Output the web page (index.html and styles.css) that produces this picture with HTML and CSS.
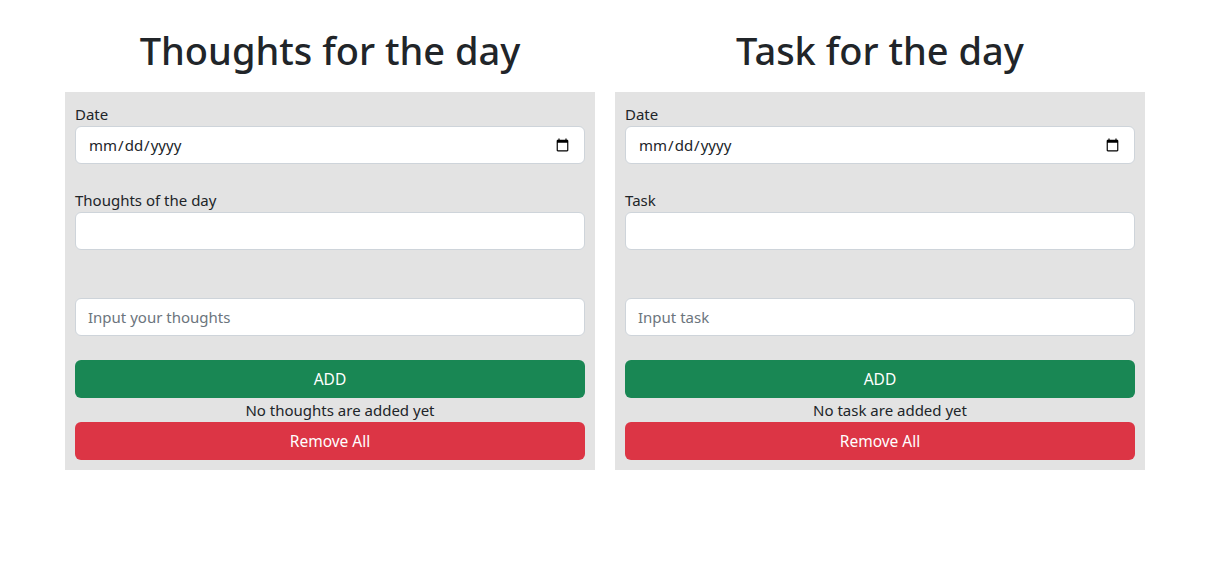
FILE: index.html
```html
<!DOCTYPE html>
<html lang="en">
<head>
<meta charset="utf-8">
<title>Thoughts and Tasks</title>
<link rel="stylesheet" href="styles.css">
</head>
<body>
<main class="page">
  <section class="column">
    <h1 class="title">Thoughts for the day</h1>
    <form class="panel">
      <label class="label" for="t-date">Date</label>
      <input class="control" id="t-date" type="date">
      <label class="label spaced" for="t-text">Thoughts of the day</label>
      <input class="control" id="t-text" type="text">
      <input class="control far" type="text" placeholder="Input your thoughts">
      <button class="btn btn-add" type="button">ADD</button>
      <p class="empty">No thoughts are added yet</p>
      <button class="btn btn-remove" type="button">Remove All</button>
    </form>
  </section>
  <section class="column">
    <h1 class="title">Task for the day</h1>
    <form class="panel">
      <label class="label" for="k-date">Date</label>
      <input class="control" id="k-date" type="date">
      <label class="label spaced" for="k-text">Task</label>
      <input class="control" id="k-text" type="text">
      <input class="control far" type="text" placeholder="Input task">
      <button class="btn btn-add" type="button">ADD</button>
      <p class="empty">No task are added yet</p>
      <button class="btn btn-remove" type="button">Remove All</button>
    </form>
  </section>
</main>
</body>
</html>
```

FILE: styles.css
```css
* { box-sizing: border-box; }

body {
  margin: 0;
  background: #ffffff;
  color: #212529;
  font-family: "Noto Sans", "Open Sans", sans-serif;
  font-size: 16px;
  line-height: 1.5;
}

.page {
  display: flex;
  gap: 20px;
  padding: 24px 0 0 65px;
}

.column {
  width: 530px;
  display: flex;
  flex-direction: column;
}

.title {
  margin: 0 0 8px;
  height: 60px;
  padding-top: 4px;
  font-size: 38px;
  font-weight: 500;
  line-height: 1.2;
  text-align: center;
  color: #212529;
}

.panel {
  display: flex;
  flex-direction: column;
  background: #e3e3e3;
  padding: 10px;
}

.label {
  display: block;
  height: 24px;
  font-size: 15px;
  line-height: 24px;
}

.label.spaced { margin-top: 24px; }

.control {
  display: block;
  width: 100%;
  height: 38px;
  padding: 6px 12px;
  font-family: inherit;
  font-size: 15px;
  color: #212529;
  background: #ffffff;
  border: 1px solid #ced4da;
  border-radius: 6px;
  outline: none;
}

.control::placeholder { color: #6c757d; }

.control.far { margin-top: 48px; }

.btn {
  display: block;
  width: 100%;
  height: 38px;
  border: 0;
  border-radius: 6px;
  font-family: inherit;
  font-size: 15.5px;
  color: #ffffff;
}

.btn-add {
  margin-top: 24px;
  background: #198754;
}

.btn-remove { background: #dc3545; }

.empty {
  margin: 0;
  height: 24px;
  padding-left: 20px;
  line-height: 24px;
  font-size: 15px;
  text-align: center;
}
```
